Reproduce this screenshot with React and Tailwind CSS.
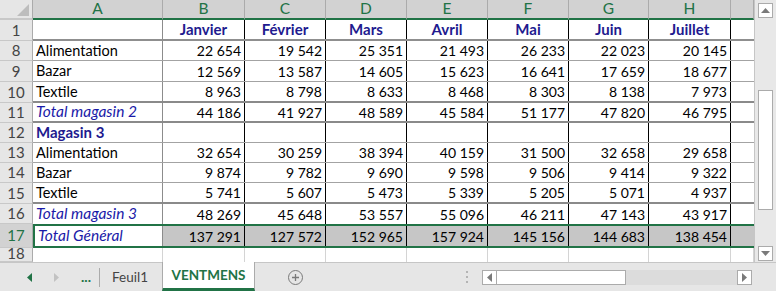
const FONT = { fontFamily: "Lato, 'Liberation Sans', sans-serif" };

const cols = ["A", "B", "C", "D", "E", "F", "G", "H", ""];
const widths = ["w-[130px]", "w-[82px]", "w-[81px]", "w-[81px]", "w-[81px]", "w-[81px]", "w-[80px]", "w-[82px]", "w-[23px]"];

// row config: label, height class, bottom border class, kind, values
const rows = [
  { n: "1", h: "h-[21px]", b: "border-b-2 border-b-[#8f8f8f]", kind: "head", label: "", vals: ["Janvier", "Février", "Mars", "Avril", "Mai", "Juin", "Juillet"] },
  { n: "8", h: "h-[20px]", b: "border-b border-b-[#a3a3a3]", label: "Alimentation", vals: ["22 654", "19 542", "25 351", "21 493", "26 233", "22 023", "20 145"] },
  { n: "9", h: "h-[21px]", b: "border-b border-b-[#a3a3a3]", label: "Bazar", vals: ["12 569", "13 587", "14 605", "15 623", "16 641", "17 659", "18 677"] },
  { n: "10", h: "h-[21px]", b: "border-b-2 border-b-[#8a8a8a]", label: "Textile", vals: ["8 963", "8 798", "8 633", "8 468", "8 303", "8 138", "7 973"] },
  { n: "11", h: "h-[20px]", b: "border-b-2 border-b-[#8a8a8a]", kind: "total", label: "Total magasin 2", vals: ["44 186", "41 927", "48 589", "45 584", "51 177", "47 820", "46 795"] },
  { n: "12", h: "h-[20px]", b: "border-b border-b-[#a3a3a3]", kind: "store", label: "Magasin 3", vals: ["", "", "", "", "", "", ""] },
  { n: "13", h: "h-[20px]", b: "border-b border-b-[#a3a3a3]", label: "Alimentation", vals: ["32 654", "30 259", "38 394", "40 159", "31 500", "32 658", "29 658"] },
  { n: "14", h: "h-[20px]", b: "border-b border-b-[#a3a3a3]", label: "Bazar", vals: ["9 874", "9 782", "9 690", "9 598", "9 506", "9 414", "9 322"] },
  { n: "15", h: "h-[21px]", b: "border-b-2 border-b-[#8a8a8a]", label: "Textile", vals: ["5 741", "5 607", "5 473", "5 339", "5 205", "5 071", "4 937"] },
  { n: "16", h: "h-[20px]", b: "", kind: "total", label: "Total magasin 3", vals: ["48 269", "45 648", "53 557", "55 096", "46 211", "47 143", "43 917"] },
];

const grand = ["137 291", "127 572", "152 965", "157 924", "145 156", "144 683", "138 454"];

function RowHeader({ n, h, sel, top }) {
  return (
    <div
      className={`w-[33px] ${h} shrink-0 flex ${top ? "items-start leading-[10px]" : "items-center"} justify-center border-r border-r-[#ababab] border-b border-b-[#c8c8c8] text-[15px] ${
        sel ? "bg-[#d2d2d2] text-[#217346]" : "bg-[#e6e6e6] text-[#444]"
      }`}
    >
      {n}
    </div>
  );
}

function DataRow({ r }) {
  const labelCls =
    r.kind === "total"
      ? "italic text-[15.5px] text-[#1a1aa8]"
      : r.kind === "store"
      ? "font-bold text-[15px] text-[#211a8f]"
      : "text-[14.5px] text-black";
  return (
    <div className="flex">
      <RowHeader n={r.n} h={r.h} />
      <div className={`flex ${r.h} ${r.b} box-border`}>
        <div className={`${widths[0]} h-full flex items-center px-[3px] border-r border-r-[#8c8c8c] ${labelCls}`}>
          {r.label}
        </div>
        {r.vals.map((v, i) => (
          <div
            key={i}
            className={`${widths[i + 1]} h-full flex items-center border-r border-r-black ${
              r.kind === "head"
                ? "justify-center font-bold text-[15px] text-[#211a8f]"
                : "justify-end pr-[3px] text-black"
            }`}
          >
            {v}
          </div>
        ))}
        <div className={`${widths[8]} h-full`} />
      </div>
    </div>
  );
}

function Triangle({ dir, color }) {
  return (
    <svg width="6" height="9" viewBox="0 0 6 9">
      {dir === "left" ? (
        <polygon points="6,0 6,9 1,4.5" fill={color} />
      ) : (
        <polygon points="0,0 0,9 5,4.5" fill={color} />
      )}
    </svg>
  );
}

export default function App() {
  return (
    <div className="w-[776px] h-[291px] bg-white overflow-hidden flex flex-col text-[14px]" style={FONT}>
      <div className="flex h-[262px]">
        {/* sheet */}
        <div className="w-[754px] flex flex-col">
          {/* column headers */}
          <div className="flex h-[20px]">
            <div className="w-[33px] h-full bg-[#e6e6e6] border-r border-r-[#ababab] border-b-2 border-b-[#c8c8c8] relative">
              <svg className="absolute right-[3px] bottom-[2px]" width="12" height="12" viewBox="0 0 12 12">
                <polygon points="12,0 12,12 0,12" fill="#bdbdbd" />
              </svg>
            </div>
            {cols.map((c, i) => (
              <div
                key={i}
                className={`${widths[i]} h-full bg-[#d2d2d2] border-r border-r-[#ababab] border-b-2 border-b-[#217346] flex items-center justify-center text-[15.5px] text-[#217346]`}
              >
                {c}
              </div>
            ))}
          </div>

          {rows.map((r) => (
            <DataRow key={r.n} r={r} />
          ))}

          {/* row 17 - selected */}
          <div className="flex">
            <RowHeader n="17" h="h-[24px]" sel />
            <div className="flex h-[24px] border-y-2 border-y-[#217346]">
              <div className={`${widths[0]} h-full flex items-center px-[3px] bg-white border-l-2 border-l-[#217346] border-r border-r-[#8c8c8c] italic text-[15.5px] text-[#1a1aa8]`}>
                Total Général
              </div>
              {grand.map((v, i) => (
                <div key={i} className={`${widths[i + 1]} h-full flex items-center justify-end pr-[3px] bg-[#c6c6c6] border-r border-r-black text-black`}>
                  {v}
                </div>
              ))}
              <div className={`${widths[8]} h-full bg-[#c6c6c6]`} />
            </div>
          </div>

          {/* row 18 */}
          <div className="flex flex-1">
            <RowHeader n="18" h="h-full" top />
            {cols.map((c, i) => (
              <div key={i} className={`${widths[i]} h-full border-r border-r-[#d4d4d4]`} />
            ))}
          </div>
        </div>

        {/* vertical scrollbar */}
        <div className="w-[22px] h-full bg-[#e8e8e8] border-l border-l-[#c6c6c6] flex flex-col items-center pt-[3px] pb-[1px]">
          <div className="w-[15px] h-[15px] bg-white border border-[#ababab] flex items-center justify-center">
            <svg width="9" height="5" viewBox="0 0 9 5"><polygon points="0,5 9,5 4.5,0" fill="#7a7a7a" /></svg>
          </div>
          <div className="w-[15px] h-[120px] bg-white border border-[#ababab] mt-[72px]" />
          <div className="flex-1" />
          <div className="w-[15px] h-[15px] bg-white border border-[#ababab] flex items-center justify-center">
            <svg width="9" height="5" viewBox="0 0 9 5"><polygon points="0,0 9,0 4.5,5" fill="#7a7a7a" /></svg>
          </div>
        </div>
      </div>

      {/* sheet tabs bar */}
      <div className="flex h-[29px] bg-[#e6e6e6] items-stretch">
        <div className="flex items-center w-[162px] border-t border-t-[#c6c6c6]">
          <div className="w-[26px]" />
          <Triangle dir="left" color="#217346" />
          <div className="w-[22px]" />
          <Triangle dir="right" color="#c2c2c2" />
          <div className="w-[18px] font-bold text-[#217346] ml-[21px] self-end mb-[7px] leading-none">...</div>
          <div className="w-px h-[19px] bg-[#ababab]" />
          <div className="flex-1 text-center text-[13.5px] text-[#444] pr-[2px]">Feuil1</div>
        </div>
        <div className="w-[93px] bg-white border-x border-x-[#ababab] border-b-[3px] border-b-[#217346] flex items-center justify-center font-bold text-[#217346] text-[13.5px] box-border">
          VENTMENS
        </div>
        <div className="flex-1 flex items-center border-t border-t-[#c6c6c6]">
          <div className="ml-[33px] w-[15px] h-[15px] rounded-full border border-[#7a7a7a] flex items-center justify-center">
            <svg width="9" height="9" viewBox="0 0 9 9">
              <path d="M4.5 1v7M1 4.5h7" stroke="#7a7a7a" strokeWidth="1.3" />
            </svg>
          </div>
          <div className="ml-[163px] flex flex-col gap-[3px]">
            <div className="w-[2px] h-[2px] bg-[#b4b4b4]" />
            <div className="w-[2px] h-[2px] bg-[#b4b4b4]" />
            <div className="w-[2px] h-[2px] bg-[#b4b4b4]" />
          </div>
          <div className="ml-[14px] flex h-[15px] w-[270px] bg-[#dcdcdc]">
            <div className="w-[15px] h-full bg-white border border-[#ababab] flex items-center justify-center">
              <svg width="5" height="9" viewBox="0 0 5 9"><polygon points="5,0 5,9 0,4.5" fill="#7a7a7a" /></svg>
            </div>
            <div className="w-[129px] h-full bg-white border border-[#ababab] border-l-0" />
            <div className="flex-1" />
            <div className="w-[15px] h-full bg-white border border-[#ababab] flex items-center justify-center">
              <svg width="5" height="9" viewBox="0 0 5 9"><polygon points="0,0 0,9 5,4.5" fill="#7a7a7a" /></svg>
            </div>
          </div>
        </div>
      </div>
    </div>
  );
}
